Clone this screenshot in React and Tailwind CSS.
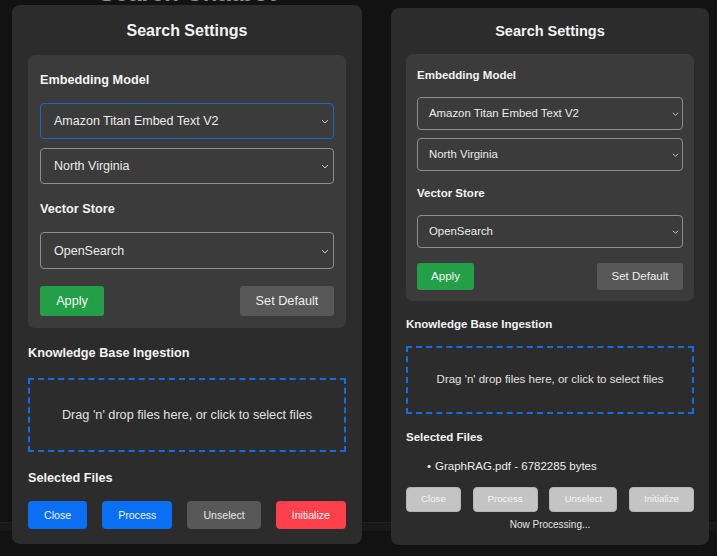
import React from "react";

function Chevron({ size = "l" }) {
  return size === "l" ? (
    <svg width="8" height="5" viewBox="0 0 8 5" className="shrink-0">
      <path d="M1 1 L4 4 L7 1" fill="none" stroke="#c8c8c8" strokeWidth="1" />
    </svg>
  ) : (
    <svg width="7" height="4" viewBox="0 0 7 4" className="shrink-0">
      <path d="M0.8 0.8 L3.5 3.3 L6.2 0.8" fill="none" stroke="#c8c8c8" strokeWidth="1" />
    </svg>
  );
}

function LeftPanel() {
  return (
    <div className="mt-[5px] w-[350px] h-[539px] rounded-[8px] bg-[#2c2c2c] px-[16px] pt-[16px] flex flex-col text-[#f3f3f3] shrink-0">
      <div className="text-center text-[16px] leading-[20px] font-bold">Search Settings</div>
      <div className="mt-[14px] rounded-[7px] bg-[#3b3b3b] px-[12px] pt-[17px] pb-[12px]">
        <div className="text-[12.7px] leading-[16px] font-bold">Embedding Model</div>
        <div className="mt-[15px] h-[36px] rounded-[4px] border border-[#1d64c9] flex items-center justify-between pl-[13px] pr-[4px] pt-[1px] text-[12.5px] text-[#ececec]">
          <span>Amazon Titan Embed Text V2</span>
          <Chevron />
        </div>
        <div className="mt-[9px] h-[36px] rounded-[4px] border border-[#8d8d8d] flex items-center justify-between pl-[13px] pr-[4px] pt-[1px] text-[12.5px] text-[#ececec]">
          <span>North Virginia</span>
          <Chevron />
        </div>
        <div className="mt-[17px] text-[12.7px] leading-[16px] font-bold">Vector Store</div>
        <div className="mt-[15px] h-[37px] rounded-[4px] border border-[#8d8d8d] flex items-center justify-between pl-[13px] pr-[4px] pt-[1px] text-[12.5px] text-[#ececec]">
          <span>OpenSearch</span>
          <Chevron />
        </div>
        <div className="mt-[17px] flex justify-between">
          <button className="h-[30px] w-[64px] rounded-[3px] bg-[#23a047] pt-[1px] text-[12.7px] text-[#f4f4f4]">Apply</button>
          <button className="h-[30px] w-[94px] rounded-[3px] bg-[#575757] pt-[1px] text-[12.7px] text-[#eeeeee]">Set Default</button>
        </div>
      </div>
      <div className="mt-[17px] text-[12.7px] leading-[16px] font-bold">Knowledge Base Ingestion</div>
      <div className="mt-[17px] h-[74px] border-2 border-dashed border-[#0f6ee3] flex items-center justify-center pt-[1px] text-[12.7px] text-[#e2e2e2]">
        Drag 'n' drop files here, or click to select files
      </div>
      <div className="mt-[18px] text-[12.7px] leading-[16px] font-bold">Selected Files</div>
      <div className="mt-[15px] flex justify-between">
        <button className="h-[28px] px-[16px] rounded-[4px] bg-[#0a6ff3] pt-[1px] text-[10.6px] text-[#f2f2f2]">Close</button>
        <button className="h-[28px] px-[16px] rounded-[4px] bg-[#0a6ff3] pt-[1px] text-[10.6px] text-[#f2f2f2]">Process</button>
        <button className="h-[28px] px-[16px] rounded-[4px] bg-[#585858] pt-[1px] text-[10.6px] text-[#e8e8e8]">Unselect</button>
        <button className="h-[28px] px-[16px] rounded-[4px] bg-[#fd404b] pt-[1px] text-[10.6px] text-[#f6f6f6]">Initialize</button>
      </div>
    </div>
  );
}

function RightPanel() {
  return (
    <div className="ml-[29px] mt-[8px] w-[318px] h-[537px] rounded-[8px] bg-[#2c2c2c] px-[15px] pt-[14px] flex flex-col text-[#f3f3f3] shrink-0">
      <div className="text-center text-[14.5px] leading-[18px] font-bold">Search Settings</div>
      <div className="mt-[14px] rounded-[7px] bg-[#3b3b3b] px-[11px] pt-[14px] pb-[11px]">
        <div className="text-[11.5px] leading-[14px] font-bold">Embedding Model</div>
        <div className="mt-[15px] h-[33px] rounded-[4px] border border-[#8d8d8d] flex items-center justify-between pl-[11px] pr-[3px] text-[11.4px] text-[#ececec]">
          <span>Amazon Titan Embed Text V2</span>
          <Chevron size="s" />
        </div>
        <div className="mt-[8px] h-[33px] rounded-[4px] border border-[#8d8d8d] flex items-center justify-between pl-[11px] pr-[3px] text-[11.4px] text-[#ececec]">
          <span>North Virginia</span>
          <Chevron size="s" />
        </div>
        <div className="mt-[15px] text-[11.5px] leading-[14px] font-bold">Vector Store</div>
        <div className="mt-[15px] h-[33px] rounded-[4px] border border-[#8d8d8d] flex items-center justify-between pl-[11px] pr-[3px] text-[11.4px] text-[#ececec]">
          <span>OpenSearch</span>
          <Chevron size="s" />
        </div>
        <div className="mt-[15px] flex justify-between">
          <button className="h-[27px] w-[57px] rounded-[3px] bg-[#23a047] pt-[1px] text-[11.5px] text-[#f4f4f4]">Apply</button>
          <button className="h-[27px] w-[86px] rounded-[3px] bg-[#575757] pt-[1px] text-[11.5px] text-[#eeeeee]">Set Default</button>
        </div>
      </div>
      <div className="mt-[16px] text-[11.5px] leading-[14px] font-bold">Knowledge Base Ingestion</div>
      <div className="mt-[15px] h-[68px] border-2 border-dashed border-[#0f6ee3] flex items-center justify-center text-[11.5px] text-[#e2e2e2]">
        Drag 'n' drop files here, or click to select files
      </div>
      <div className="mt-[16px] text-[11.5px] leading-[14px] font-bold">Selected Files</div>
      <div className="mt-[15px] flex items-center pl-[21px] text-[11.5px] leading-[14px] text-[#ececec]">
        <span className="w-[8px]">•</span>
        <span>GraphRAG.pdf - 6782285 bytes</span>
      </div>
      <div className="mt-[14px] flex justify-between">
        <button className="h-[25px] px-[14px] rounded-[4px] border border-[#b4b4b4] bg-[#c4c4c4] text-[9.7px] text-[#f4f4f4]">Close</button>
        <button className="h-[25px] px-[14px] rounded-[4px] border border-[#b4b4b4] bg-[#c4c4c4] text-[9.7px] text-[#f4f4f4]">Process</button>
        <button className="h-[25px] px-[14px] rounded-[4px] border border-[#b4b4b4] bg-[#c4c4c4] text-[9.7px] text-[#f4f4f4]">Unselect</button>
        <button className="h-[25px] px-[14px] rounded-[4px] border border-[#b4b4b4] bg-[#c4c4c4] text-[9.7px] text-[#f4f4f4]">Initialize</button>
      </div>
      <div className="mt-[7px] text-center text-[10px] leading-[12px] text-[#e4e4e4]">Now Processing...</div>
    </div>
  );
}

export default function App() {
  return (
    <div className="relative w-[717px] h-[556px] overflow-hidden bg-[#121212] font-['Liberation_Sans',Arial,sans-serif]">
      {/* page behind the modals */}
      <div className="h-full flex flex-col">
        <div className="-mt-[21px] w-[375px] text-center text-[24px] leading-[28px] font-bold text-[#8f8f8f]">Search Chatbot</div>
        <div className="mt-auto mb-[25px] h-[9px] border-t border-[#202020] bg-[#181818]"></div>
      </div>
      {/* modal overlays */}
      <div className="absolute inset-0 flex items-start pl-[12px]">
        <LeftPanel />
        <RightPanel />
      </div>
    </div>
  );
}
